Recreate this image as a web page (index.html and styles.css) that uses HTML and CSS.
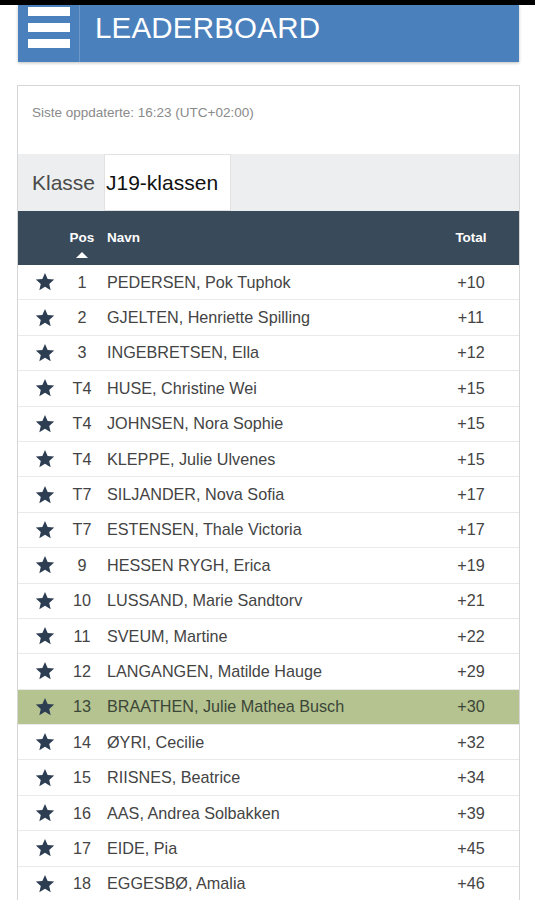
FILE: index.html
```html
<!DOCTYPE html>
<html lang="no">
<head>
<meta charset="utf-8">
<title>Leaderboard</title>
<link rel="stylesheet" href="styles.css">
</head>
<body>
<div class="statusbar"></div>
<header class="header">
  <div class="menu"><span></span><span></span><span></span></div>
  <h1 class="title">LEADERBOARD</h1>
</header>
<section class="card">
  <div class="updated">Siste oppdaterte: 16:23 (UTC+02:00)</div>
  <div class="klasse">
    <span class="klasse-label">Klasse</span>
    <div class="select">J19-klassen</div>
  </div>
  <div class="thead">
    <div class="c-star"></div>
    <div class="c-pos">Pos<span class="sort"></span></div>
    <div class="c-name">Navn</div>
    <div class="c-total">Total</div>
  </div>
  <div class="tbody" id="rows"></div>
</section>
<script>
const data = [
  ["1","PEDERSEN, Pok Tuphok","+10"],
  ["2","GJELTEN, Henriette Spilling","+11"],
  ["3","INGEBRETSEN, Ella","+12"],
  ["T4","HUSE, Christine Wei","+15"],
  ["T4","JOHNSEN, Nora Sophie","+15"],
  ["T4","KLEPPE, Julie Ulvenes","+15"],
  ["T7","SILJANDER, Nova Sofia","+17"],
  ["T7","ESTENSEN, Thale Victoria","+17"],
  ["9","HESSEN RYGH, Erica","+19"],
  ["10","LUSSAND, Marie Sandtorv","+21"],
  ["11","SVEUM, Martine","+22"],
  ["12","LANGANGEN, Matilde Hauge","+29"],
  ["13","BRAATHEN, Julie Mathea Busch","+30"],
  ["14","ØYRI, Cecilie","+32"],
  ["15","RIISNES, Beatrice","+34"],
  ["16","AAS, Andrea Solbakken","+39"],
  ["17","EIDE, Pia","+45"],
  ["18","EGGESBØ, Amalia","+46"]
];
const star = '<svg viewBox="0 0 24 24" width="22" height="22"><path d="M12 2.2l2.9 6.6 7.1.6-5.4 4.7 1.6 7-6.2-3.8-6.2 3.8 1.6-7L2 9.4l7.1-.6z"/></svg>';
const tb = document.getElementById('rows');
tb.innerHTML = data.map(r => `<div class="row${r[0]==='13'?' hl':''}"><div class="c-star">${star}</div><div class="c-pos">${r[0]}</div><div class="c-name">${r[1]}</div><div class="c-total">${r[2]}</div></div>`).join('');
</script>
</body>
</html>
```
FILE: styles.css
```css
* { box-sizing: border-box; }
html, body { margin: 0; padding: 0; background: #fff; }
body { font-family: "Liberation Sans", Arial, sans-serif; color: #444; }

.statusbar { height: 5px; background: #000; }

.header {
  display: flex;
  align-items: stretch;
  height: 57px;
  margin-left: 18px;
  width: 501px;
  background: #4a80bc;
  box-shadow: 0 1px 3px rgba(0,0,0,0.25);
}
.menu {
  width: 62px;
  border-right: 1px solid #6b98c9;
  display: flex;
  flex-direction: column;
  gap: 7px;
  padding: 2px 0 0 10px;
}
.menu span {
  display: block;
  width: 42px;
  height: 9px;
  background: #fff;
}
.title {
  margin: 0;
  padding: 0 0 0 15px;
  font-weight: normal;
  font-size: 29.5px;
  line-height: 46px;
  color: #fff;
  letter-spacing: 0.2px;
}

.card {
  margin: 23px 0 0 17px;
  width: 503px;
  border: 1px solid #d6d6d6;
  border-bottom: none;
}
.updated {
  height: 68px;
  padding: 19px 0 0 14px;
  font-size: 13.5px;
  color: #8a8a8a;
}
.klasse {
  display: flex;
  align-items: stretch;
  height: 57px;
  background: #eceeef;
}
.klasse-label {
  padding-left: 14px;
  width: 86px;
  font-size: 21px;
  line-height: 57px;
  color: #4a4a4a;
}
.select {
  width: 127px;
  background: #fff;
  border: 1px solid #e2e2e2;
  padding-left: 1px;
  font-size: 21px;
  line-height: 55px;
  color: #111;
}

.thead, .row {
  display: grid;
  grid-template-columns: 48px 32px 1fr 80px;
  align-items: center;
  padding-right: 8px;
}
.thead {
  height: 54px;
  background: #394a5b;
  color: #fff;
  font-weight: bold;
  font-size: 13.5px;
  align-items: start;
  padding-top: 19px;
}
.thead .c-pos { position: relative; text-align: center; }
.sort {
  display: block;
  width: 0; height: 0;
  margin: 7px auto 0;
  border-left: 6px solid transparent;
  border-right: 6px solid transparent;
  border-bottom: 6px solid #fff;
}
.thead .c-total { text-align: center; }

.row {
  height: 35.4px;
  border-bottom: 1px solid #e9e9e9;
  font-size: 16.2px;
  color: #444;
}
.row.hl { background: #b4c390; color: #3c4638; }
.c-star { padding-left: 16px; display: flex; align-items: center; }
.c-star svg { fill: #2e3e52; display: block; }
.row .c-pos { text-align: center; }
.c-name { padding-left: 9px; white-space: nowrap; }
.row .c-total { text-align: center; }
```
